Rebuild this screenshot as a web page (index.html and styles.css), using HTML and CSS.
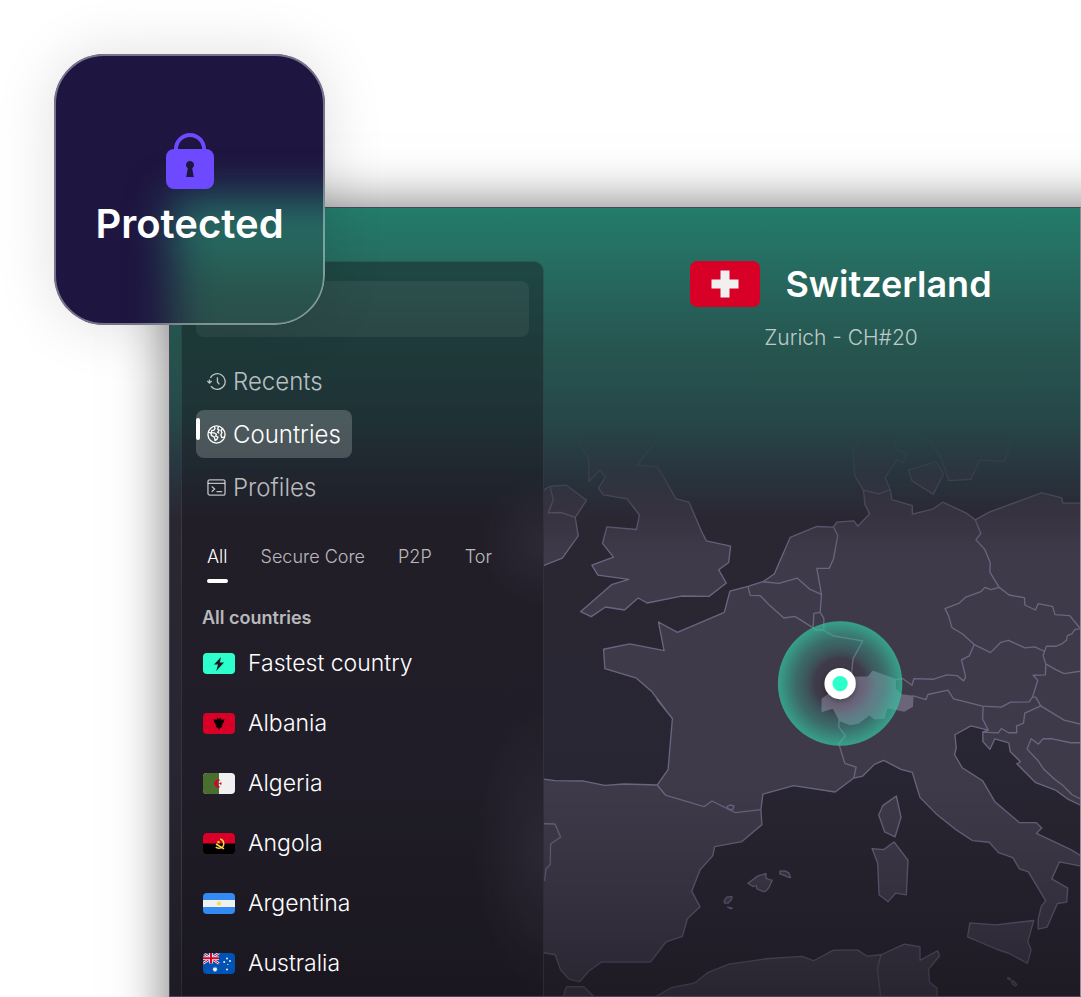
FILE: index.html
```html
<!DOCTYPE html>
<html lang="en">
<head>
    <meta charset="UTF-8">
    <meta name="viewport" content="width=device-width, initial-scale=1">
    <title>VPN - Switzerland</title>
    <link rel="stylesheet" href="styles.css">
</head>
<body>
<div class="app">
    <aside class="sidebar">
        <input class="search" type="search" aria-label="Search">

        <nav class="nav">
            <a class="nav-item" href="#">
                <svg class="nav-icon" viewBox="0 0 20 20">
                    <path d="M3.500 6.200A8.300 8.300 0 1 1 4.200 15"/>
                    <path d="M2.600 11.500V8M.3 9.400l2.300 2.200 2.400-2.200M11 5.500v5l2 2.600"/>
                </svg>
                Recents
            </a>
            <a class="nav-item active" href="#">
                <svg class="nav-icon" viewBox="0 0 20 20">
                    <circle cx="10" cy="10" r="9"/>
                    <path d="M7.500 1.500l1 2-1.300 2.200H5L4.600 8l3 .2 2.200 1.600-.6 1.800 2.300 1-1.200 2.600-1.800 1-.7-3.400-3.200-2-.5-2.400L1.300 7.500"/>
                    <path d="M12.200 1.400l-1 2.800 1.600 1.200-1.500 2.200 1.500 1.100M16.500 4l-1.800 1.800 1 2.200-1.100 2.200 1 3 2.700-.5"/>
                </svg>
                Countries
            </a>
            <a class="nav-item" href="#">
                <svg class="nav-icon" viewBox="0 0 20 20">
                    <rect x="1" y="2" width="18" height="16" rx="2"/>
                    <path d="M1 5.600h18M5 9l3 2.600-3 2.800M10 14.400h6"/>
                </svg>
                Profiles
            </a>
        </nav>

        <div class="tabs" role="tablist">
            <button class="tab active" role="tab" aria-selected="true">All</button>
            <button class="tab" role="tab">Secure Core</button>
            <button class="tab" role="tab">P2P</button>
            <button class="tab" role="tab">Tor</button>
        </div>

        <h2 class="list-title">All countries</h2>
        <ul class="countries">
            <li><a class="country" href="#">
                <svg class="flag" viewBox="0 0 32 21">
                    <rect width="32" height="21" fill="#2cffcc"/>
                    <path d="M18 4l-7 7.600h4l-1.800 6.400 7.800-8.600h-4.200z" fill="#1c1b24"/>
                </svg>
                Fastest country
            </a></li>
            <li><a class="country" href="#">
                <svg class="flag" viewBox="0 0 32 21">
                    <rect width="32" height="21" fill="#d80027"/>
                    <path d="M14 5l1.300.6.7.8.7-.8L18 5l.2 1.800 3.600-.4-1 1.600.4 1.300-1.600.5.2 1.600-1.500.6 1 1.600-1.300 1.200-.8-.4L16 17l-1.200-2.600-.8.4-1.300-1.200 1-1.600-1.500-.6.2-1.600-1.600-.5.4-1.300-1-1.600 3.600.4z" fill="#000"/>
                </svg>
                Albania
            </a></li>
            <li><a class="country" href="#">
                <svg class="flag" viewBox="0 0 32 21">
                    <rect width="32" height="21" fill="#f0f0f0"/>
                    <rect width="16" height="21" fill="#496e2d"/>
                    <path d="M17.600 7.200a4 4 0 1 0 0 6.600 3.300 3.300 0 1 1 0-6.600z" fill="#d80027"/>
                    <path d="M17 8.700l.7 1 1.300-.3-.8 1.100.8 1.100-1.300-.3-.7 1v-1.300l-1.400-.5 1.400-.5z" fill="#d80027"/>
                </svg>
                Algeria
            </a></li>
            <li><a class="country" href="#">
                <svg class="flag" viewBox="0 0 32 21">
                    <rect width="32" height="21"/>
                    <rect width="32" height="10.500" fill="#d80027"/>
                    <path d="M17.200 6c4.400 1.200 4.800 7.600.6 8.900-2 .6-4 .2-5-.9M13 11l8 4.800" fill="none" stroke="#ffda44" stroke-width="1.500"/>
                    <path d="M15.500 7.500l.6 1.100h1.200l-.9.900.4 1.200-1.300-.6-1.100.6.200-1.200-.9-.9h1.200z" fill="#ffda44"/>
                </svg>
                Angola
            </a></li>
            <li><a class="country" href="#">
                <svg class="flag" viewBox="0 0 32 21">
                    <rect width="32" height="21" fill="#338af3"/>
                    <rect y="7" width="32" height="7" fill="#f0f0f0"/>
                    <circle cx="16" cy="10.500" r="2.100" fill="#ffda44"/>
                </svg>
                Argentina
            </a></li>
            <li><a class="country" href="#">
                <svg class="flag" viewBox="0 0 32 21">
                    <rect width="32" height="21" fill="#0052b4"/>
                    <path d="M0 0l16 10.500M16 0L0 10.500" stroke="#f0f0f0" stroke-width="2.600"/>
                    <path d="M0 0l16 10.500M16 0L0 10.500" stroke="#d80027" stroke-width="1"/>
                    <path d="M8 0v10.500M0 5.200h16" stroke="#f0f0f0" stroke-width="3.600"/>
                    <path d="M8 0v10.500M0 5.200h16" stroke="#d80027" stroke-width="2"/>
                    <path d="M12 13.500l.7 1.400 1.500-.3-.6 1.400 1.100 1-1.500.4v1.500L12 18l-1.200.9v-1.500l-1.500-.4 1.100-1-.6-1.400 1.500.3z" fill="#f0f0f0"/>
                    <g fill="#f0f0f0">
                        <circle cx="24" cy="5.400" r="1"/>
                        <circle cx="21.200" cy="8.900" r="1"/>
                        <circle cx="27" cy="8" r="1"/>
                        <circle cx="24.800" cy="11.400" r=".6"/>
                        <circle cx="24" cy="16.400" r="1"/>
                    </g>
                </svg>
                Australia
            </a></li>
        </ul>
    </aside>

    <main class="main">
        <header class="location">
            <h1 class="location-name">
                <svg class="location-flag" viewBox="0 0 70 46">
                    <rect width="70" height="46" fill="#d80027"/>
                    <path d="M30.500 9.500h9v9h9v9h-9v9h-9v-9h-9v-9h9z" fill="#f0f0f0"/>
                </svg>
                Switzerland
            </h1>
            <p class="location-server">Zurich - CH#20</p>
        </header>

        <svg class="map" viewBox="12 0 1611 1731" preserveAspectRatio="xMidYMin slice">
            <defs>
                <linearGradient id="fade" x1="0" y1="0" x2="0" y2="1731" gradientUnits="userSpaceOnUse">
                    <stop offset=".02" stop-color="#fff" stop-opacity="0"/>
                    <stop offset=".09" stop-color="#fff" stop-opacity=".2"/>
                    <stop offset=".23" stop-color="#fff"/>
                    <stop offset=".63" stop-color="#fff"/>
                    <stop offset="1" stop-color="#fff" stop-opacity=".32"/>
                </linearGradient>
                <mask id="mapMask" maskUnits="userSpaceOnUse" x="-50" y="0" width="1750" height="1800">
                    <rect x="-50" width="1750" height="1800" fill="url(#fade)"/>
                </mask>
                <radialGradient id="pulse">
                    <stop offset=".4" stop-color="#2cffcc" stop-opacity="0"/>
                    <stop offset=".7" stop-color="#34c4a2" stop-opacity=".34"/>
                    <stop offset="1" stop-color="#34c4a2" stop-opacity=".74"/>
                </radialGradient>
                <filter id="pinShadow" x="-50%" y="-50%" width="200%" height="200%">
                    <feDropShadow dx="0" dy="6" stdDeviation="10" flood-opacity=".4"/>
                </filter>
            </defs>

            <g mask="url(#mapMask)">
                <g class="land">
                    <!-- Great Britain, Ireland -->
                    <path d="M134 30L120 75 146 115 147 185 180 151 197 171 176 205 190 225 262 237 299 286 290 329 201 321 188 371 221 412 156 436 174 466 267 479 215 495 122 576 154 591 197 562 254 571 295 535 322 550 425 529 508 530 560 490 537 450 567 428 573 379 500 363 486 336 448 247 409 237 353 140 292 136 346 67 355 30"/>
                    <path d="M-10 447L12 437 67 415 115 348 106 293 140 241 79 196 30 199 12 210-10 220z"/>
                    <!-- continent -->
                    <path d="M-20 1076L12 1079 45 1084 131 1085 195 1098 253 1094 352 1097 385 1051 398 897 352 840 377 870 335 815 290 776 195 747 191 689 270 673 373 693 356 607 413 638 554 578 571 514 625 500 670 486 704 463 752 353 832 320 882 322 892 307 943 303 955 319 991 282 977 255 972 211 946 168 940 95 965 53 1018 48 1030 20 1085 20 1065 70 1072 90 1104 99 1092 128 1073 120 1037 173 1053 210 1057 239 1119 257 1119 283 1180 268 1210 247 1280 279 1308 300 1350 277 1507 219 1567 233 1572 250 1650 250 1650 1170 1623 1157 1588 1140 1549 1112 1490 1090 1433 1033 1444 1027 1413 996 1409 970 1367 958 1352 990 1331 966 1331 938 1347 932 1295 919 1247 946 1251 985 1246 1006 1269 1045 1330 1084 1367 1147 1441 1210 1492 1210 1508 1226 1492 1242 1597 1292 1650 1325 1650 1345 1561 1328 1538 1379 1586 1407 1583 1449 1555 1453 1524 1524 1497 1530 1497 1500 1507 1460 1520 1445 1468 1358 1441 1349 1421 1315 1378 1300 1350 1269 1300 1264 1250 1231 1190 1183 1142 1134 1119 1059 1085 1050 1033 1023 1005 1035 970 1070 943 1076 887 1118 762 1099 670 1124 664 1171 667 1216 607 1267 525 1282 519 1310 481 1352 456 1416 481 1463 443 1499 428 1552 379 1568 332 1629 185 1629 147 1656 119 1688 87 1680 62 1653 46 1607 12 1601-20 1595z"/>
                    <!-- Denmark, Sweden -->
                    <path d="M1107 151L1191 125 1213 162 1182 223 1118 183z"/>
                    <path d="M1148 25L1203 110 1229 182 1295 178 1322 121 1395 125 1418 60 1420 25"/>
                    <!-- Corsica, Sardinia, Sicily, Malta -->
                    <path d="M1071 1130L1085 1194 1067 1253 1036 1238 1018 1187 1031 1158z"/>
                    <path d="M1064 1268L1106 1323 1101 1427 1069 1422 1046 1448 1019 1427 1015 1332 998 1288 1033 1291z"/>
                    <path d="M1292 1511L1370 1517 1484 1504 1466 1567 1476 1592 1465 1633 1412 1604 1376 1592 1285 1553z"/>
                    <path d="M1406 1676l8 2-2 5-6-3zM1417 1685l8 2 8 10-5 4-8-6z"/>
                    <!-- Balearic islands -->
                    <path d="M625 1392l30-22 24-7v14l10 4 9 2-10 22-8 10-8 2-20-8-2-10-10 3z"/>
                    <path d="M721 1356l15-1 12 6 5 14-10-2-12-6-10-3zM553 1446l8-12 16-2-2 10-10 10-10 0zM564 1464l14 3-4 2z"/>
                    <!-- North Africa -->
                    <path d="M60 1760L80 1703 132 1703 190 1760z"/>
                    <path d="M300 1760L395 1706 465 1692 505 1660 568 1635 680 1619 788 1612 822 1625 882 1593 955 1593 982 1611 1025 1607 1095 1575 1142 1583 1142 1624 1195 1595 1201 1610 1168 1650 1171 1690 1194 1708 1192 1760z"/>
                </g>
                <path class="selected" d="M846 838L846 878 880 868 900 905 932 917 958 913 990 888 1005 900 1035 898 1045 867 1095 877 1121 862 1123 829 1088 824 1070 808 1070 778 1000 753 985 771 940 771z"/>
                <g class="border">
                    <path d="M30 199L40 240 25 279 65 278 106 293"/>
                    <path d="M972 211L1017 222 1053 210"/>
                    <path d="M882 322L895 347 882 418 869 446 832 446 846 524 842 578 853 596 853 630"/>
                    <path d="M842 578L823 581 821 624"/>
                    <path d="M625 500L632 527 662 528 690 557 733 595 766 590 820 624 829 631 851 631 882 649 970 664 941 717 936 765"/>
                    <path d="M670 486L718 491 773 475 810 508 846 524"/>
                    <path d="M1308 300L1325 341 1310 360 1336 388 1353 428 1352 457 1380 503 1410 526 1456 534 1457 556 1489 571 1497 552 1540 560 1548 585 1592 588 1620 622 1650 640"/>
                    <path d="M1380 503L1355 510 1337 503 1325 516 1280 532 1260 550 1217 567 1228 588 1238 624 1270 643 1305 675 1354 699 1385 668 1408 662 1457 685 1487 682 1515 695"/>
                    <path d="M1650 626L1608 629 1598 643 1585 648 1582 662 1568 673 1550 680 1522 680 1512 708 1520 733 1550 750 1575 762 1650 751"/>
                    <path d="M1305 675L1290 709 1267 721 1279 772 1273 784 1253 768 1223 766 1183 779 1124 777 1118 797 1090 777 1070 780"/>
                    <path d="M1120 828L1160 840 1166 825 1226 812 1243 838 1330 860 1386 863 1415 848 1470 847 1480 833 1496 782 1482 767 1519 766 1520 733"/>
                    <path d="M1332 862L1330 898 1347 932 1331 938 1377 940 1387 927 1408 940 1433 940 1432 920 1453 911 1457 881 1505 859 1490 833 1480 833"/>
                    <path d="M1505 859L1575 902 1650 920"/>
                    <path d="M1650 970L1595 970 1540 958 1512 958 1498 974 1476 958 1464 989 1497 1024 1512 1047 1545 1078 1570 1097 1600 1127 1650 1150"/>
                    <path d="M899 900L898 922 918 949 898 973 916 1032 950 1043 943 1076"/>
                    <path d="M352 1097L377 1127 493 1162 517 1145 587 1180 664 1171"/>
                    <path d="M562 1162l9-5 12 3-3 10h-13z"/>
                    <path d="M-10 1213L45 1214 62 1253 32 1274 31 1335 18 1350 14 1385"/>
                    <path d="M1025 1607L1014 1648 1027 1760"/>
                </g>
            </g>

            <circle cx="902" cy="792" r="187" fill="url(#pulse)"/>
            <circle cx="902" cy="792" r="47" fill="#fff" filter="url(#pinShadow)"/>
            <circle cx="902" cy="792" r="23" fill="#2cffcc"/>
        </svg>
    </main>
</div>

<div class="status">
    <svg class="lock" viewBox="0 0 48 56">
        <path d="M10 18v-2a14 14 0 0 1 28 0v2" fill="none" stroke="#6d4aff" stroke-width="4"/>
        <rect y="16" width="48" height="40" rx="8" fill="#6d4aff"/>
        <path d="M24 28a4 4 0 0 1 2.200 7.300L27.800 44h-7.600l1.600-8.700A4 4 0 0 1 24 28z" fill="#1e1540"/>
    </svg>
    <p class="status-text">Protected</p>
</div>
</body>
</html>
```
FILE: styles.css
```css
* {
    box-sizing: border-box;
    margin: 0;
    padding: 0;
}
body {
    display: flex;
    flex-direction: column;
    height: 100vh;
    padding: 207px 0 0 169px;
    overflow: hidden;
    background: #fff;
    font-family: Inter, "Liberation Sans", sans-serif;
    color: #fff;
}
a {
    color: inherit;
    text-decoration: none;
}
ul {
    list-style: none;
}

/* window, its shadow runs on past the right and bottom edges */
.app {
    display: flex;
    flex: 1;
    min-height: 0;
    padding-left: 11px;
    border: 1px solid #4a4658;
    border-right-color: #8b8f99;
    background: linear-gradient(#237c6a 0, #266b60 60px, #265550 140px, #264848 210px, #28363f 260px, #2a2733 310px, #292633 560px, #1e1b25 790px);
    box-shadow: 40px 40px 50px 40px rgba(0, 0, 0, .55);
}

/* sidebar */
.sidebar {
    width: 363px;
    flex-shrink: 0;
    margin-top: 53px;
    padding: 19px 14px 0;
    overflow: hidden;
    border: 1px solid rgba(255, 255, 255, .08);
    border-bottom: 0;
    border-radius: 10px 10px 0 0;
    background:
        radial-gradient(circle 65px at 363px 280px, rgba(63, 58, 73, .4), transparent),
        radial-gradient(ellipse 70px 140px at 363px 590px, rgba(63, 58, 73, .4), transparent),
        rgba(20, 18, 25, .4);
}
.search {
    display: block;
    width: 100%;
    height: 56px;
    padding: 0 16px;
    border: 0;
    border-radius: 8px;
    background: rgba(255, 255, 255, .06);
    color: #fff;
    font: 20px Inter, sans-serif;
}
.nav {
    display: flex;
    flex-direction: column;
    align-items: flex-start;
    gap: 5px;
    margin-top: 20px;
}
.nav-item {
    display: flex;
    align-items: center;
    gap: 7px;
    height: 48px;
    padding: 0 11px;
    border-radius: 8px;
    color: rgba(255, 255, 255, .7);
    font-size: 24px;
    font-weight: 350;
}
.nav-item.active {
    position: relative;
    background: rgba(255, 255, 255, .2);
    color: #fff;
}
.nav-item.active::before {
    content: "";
    position: absolute;
    left: 0;
    top: 8px;
    width: 4px;
    height: 22px;
    border-radius: 2px;
    background: #fff;
}
.nav-icon {
    width: 19px;
    height: 19px;
    fill: none;
    stroke: currentColor;
    stroke-width: 1.4;
}
.tabs {
    display: flex;
    gap: 33px;
    margin-top: 32px;
    padding-left: 11px;
}
.tab {
    height: 40px;
    padding-bottom: 12px;
    border: 0;
    background: none;
    color: rgba(255, 255, 255, .7);
    font: 350 18px/28px Inter, sans-serif;
}
.tab.active {
    position: relative;
    color: #fff;
}
.tab.active::after {
    content: "";
    position: absolute;
    left: 0;
    right: 0;
    bottom: 0;
    height: 4px;
    border-radius: 2px;
    background: #fff;
}
.list-title {
    margin-top: 23px;
    padding-left: 6px;
    color: rgba(255, 255, 255, .7);
    font-size: 18px;
    font-weight: 600;
    line-height: 24px;
}
.countries {
    margin-top: 3px;
}
.country {
    display: flex;
    align-items: center;
    gap: 13px;
    height: 60px;
    padding-left: 7px;
    font-size: 23px;
    font-weight: 350;
}
.flag {
    width: 32px;
    height: 21px;
    border-radius: 4px;
}

/* map */
.main {
    display: flex;
    flex: 1;
    flex-direction: column;
    min-width: 0;
}
.location {
    flex-shrink: 0;
    height: 212px;
    padding-top: 52px;
    padding-left: 58px;
    text-align: center;
}
.location-name {
    display: flex;
    align-items: center;
    justify-content: center;
    gap: 25px;
    font-size: 36px;
    font-weight: 600;
    line-height: 48px;
}
.location-flag {
    width: 70px;
    height: 46px;
    border-radius: 7px;
}
.location-server {
    margin-top: 16px;
    color: rgba(255, 255, 255, .7);
    font-size: 21px;
    font-weight: 300;
    line-height: 28px;
}
.map {
    display: block;
    flex: 1;
    width: 100%;
    min-height: 0;
}
.land {
    fill: #3f3a49;
    stroke: #6b6580;
    stroke-width: 4;
    stroke-linejoin: round;
}
.border {
    fill: none;
    stroke: #6b6580;
    stroke-width: 4;
    stroke-linejoin: round;
}
.selected {
    fill: #6b657a;
}

/* floating status card */
.status {
    position: absolute;
    left: 54px;
    top: 54px;
    display: flex;
    flex-direction: column;
    align-items: center;
    width: 271px;
    height: 271px;
    padding-top: 79px;
    overflow: hidden;
    border-radius: 50px;
    background: #1e1540;
    box-shadow: 0 0 60px rgba(0, 0, 0, .13);
}
/* blurred corner of the window seen through the card */
.status::before {
    content: "";
    position: absolute;
    left: 118px;
    top: 144px;
    right: -60px;
    bottom: -60px;
    background: linear-gradient(#266f66 30px, #28574f 80px, #2c4c4a 140px);
    filter: blur(22px);
}
.status::after {
    content: "";
    position: absolute;
    inset: 0;
    border: 2px solid rgba(255, 255, 255, .4);
    border-radius: 50px;
}
.lock {
    position: relative;
    width: 48px;
    height: 56px;
}
.status-text {
    position: relative;
    margin-top: 9px;
    font-size: 40px;
    font-weight: 600;
    line-height: 52px;
}
```
